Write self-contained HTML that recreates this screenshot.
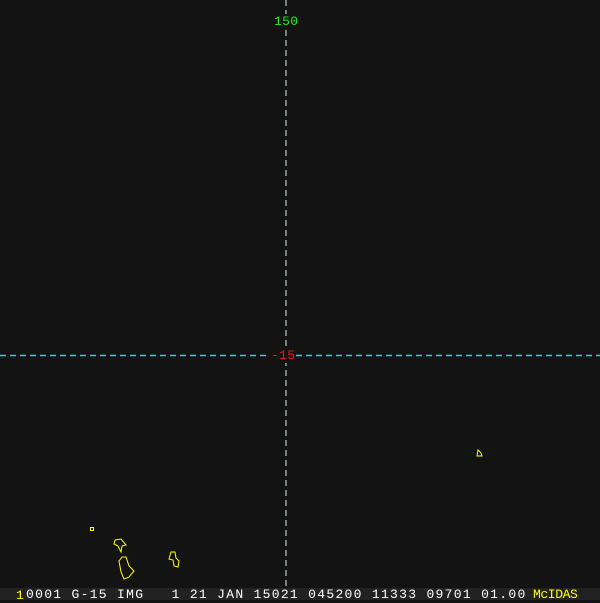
<!DOCTYPE html>
<html><head><style>
body{margin:0;width:600px;height:600px;background:#131313;overflow:hidden;position:relative;font-family:"Liberation Mono",monospace}
.t{position:absolute;font-size:13px;line-height:13px;white-space:pre}
</style></head><body>
<svg width="600" height="600" style="position:absolute;left:0;top:0">
<line x1="286" y1="0" x2="286" y2="588" stroke="#d8f0f4" stroke-width="1" stroke-dasharray="6,4"/>
<line x1="0" y1="355.5" x2="272" y2="355.5" stroke="#22d8e0" stroke-width="1.5" stroke-dasharray="6,4"/>
<line x1="296" y1="355.5" x2="600" y2="355.5" stroke="#22d8e0" stroke-width="1.5" stroke-dasharray="6,4"/>
<rect x="272" y="14" width="28" height="14" fill="#131313"/>
<rect x="270" y="349" width="26" height="14" fill="#131313"/>
<rect x="0" y="588" width="600" height="12" fill="#222"/>
<g fill="none" stroke="#ffff00" stroke-width="1">
<rect x="90.5" y="527.5" width="3" height="3"/>
<path d="M115,540 L121,539 L126,545 L122,546 L121,552 L118,546 L114,544 Z"/>
<path d="M122,557 L126,557 L129,566 L134,571 L129,577 L124,579 L121,572 L119,561 Z"/>
<path d="M171,552 L175,552 L176,558 L179,561 L178,567 L174,566 L173,560 L169,559 Z"/>
<path d="M478,450 L481,453 L482,456 L477,456 Z"/>
</g>
</svg>
<div class="t" style="left:274px;top:15px;color:#22ee22;letter-spacing:0.3px">150</div>
<div class="t" style="left:271px;top:349px;color:#ff1010;letter-spacing:0.3px">-15</div>
<div class="t" style="left:16px;top:589px;color:#ffff00">1</div>
<div class="t" style="left:26px;top:588px;color:#fff;letter-spacing:1.3px">0001 G-15 IMG   1 21 JAN 15021 045200 11333 09701 01.00</div>
<div class="t" style="left:533px;top:588px;color:#ffff00;letter-spacing:-0.4px">McIDAS</div>
</body></html>
